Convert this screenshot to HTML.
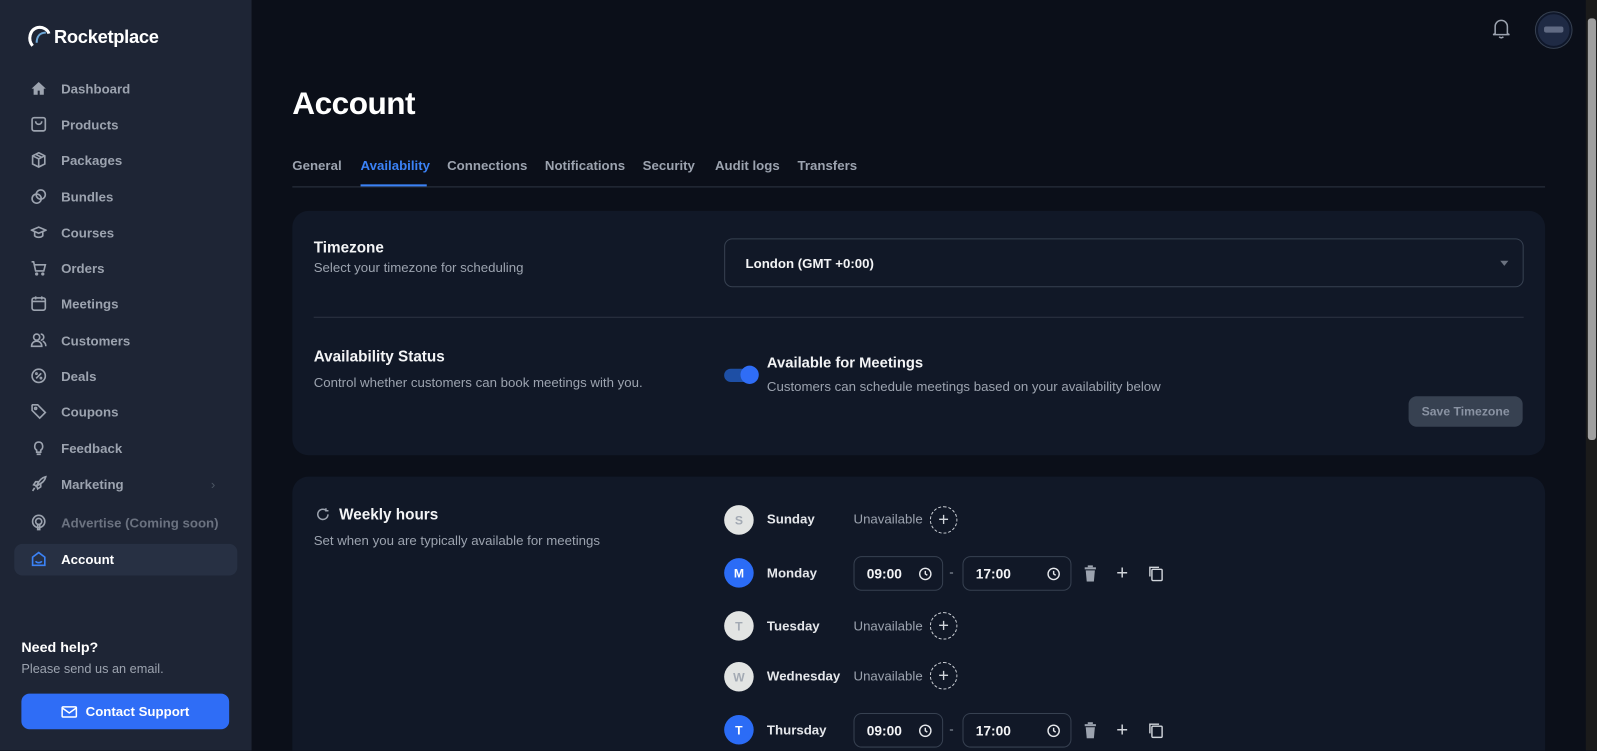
<!DOCTYPE html><html><head><meta charset="utf-8"><style>
*{box-sizing:border-box;margin:0;padding:0}
html{width:1597px;height:751px;overflow:hidden}
body{width:1597px;height:751px;overflow:hidden;background:#0b0f19;font-family:"Liberation Sans",sans-serif;position:relative;color:#e5e7eb}
#clip{position:absolute;left:0;top:0;width:1597px;height:751px;overflow:hidden}
#w{position:absolute;left:0;top:0;width:1568px;height:737px;overflow:hidden;transform:scale(1.0185);transform-origin:0 0}
.a{position:absolute}
#sb{left:0;top:0;width:247px;height:737px;background:#1e2535}
.ni{position:absolute;left:30px;font-size:13px;font-weight:bold;color:#9ca3af;display:flex;align-items:center;height:20px}
.ni svg{width:16px;height:16px;margin-right:14px;stroke:#9ca3af;fill:none;stroke-width:1.6}
.tab{position:absolute;top:155px;font-size:13px;font-weight:bold;color:#9ca3af}
.card{position:absolute;left:287px;width:1230px;background:#111827;border-radius:16px}
.t1{font-size:15px;font-weight:bold;color:#f3f4f6}
.t2{font-size:13px;color:#9ca3af}
.av{position:absolute;left:711px;width:29px;height:29px;border-radius:50%;font-size:12px;font-weight:bold;display:flex;align-items:center;justify-content:center}
.gr{background:#e2e4e3;color:#a3aab4}
.bl{background:#2b6cf6;color:#fff}
.dn{position:absolute;left:753px;font-size:13px;font-weight:bold;color:#e5e7eb}
.un{position:absolute;left:838px;font-size:13px;color:#9ca3af}
.pl{position:absolute;left:913px;width:27px;height:27px;border:1px dashed #d1d5db;border-radius:50%;color:#d1d5db;font-size:18px;line-height:24px;text-align:center}
.tm{position:absolute;height:34px;border:1px solid #374151;border-radius:8px;font-size:13.5px;font-weight:bold;color:#f3f4f6;padding:9px 0 0 12px}
.tm svg{position:absolute;right:10px;top:10px}
</style></head><body><div id="clip"><div id="w">
<div id="sb" class="a">
<div class="a" style="left:26px;top:24px;display:flex;align-items:center">
<svg width="24" height="24" viewBox="0 0 24 24"><path d="M6 21C1 15 3 5 11 3c5-1 10 2 11 6" stroke="#fff" stroke-width="3" fill="none"/><path d="M10 18c0-6 3-10 9-10" stroke="#6ea8d8" stroke-width="2" fill="none"/></svg>
<span style="font-size:18px;font-weight:bold;color:#fff;margin-left:3px;letter-spacing:-0.3px">Rocketplace</span></div>
<div class="ni" style="top:77px"><svg viewBox="0 0 16 16" style="fill:#9ca3af;stroke:none"><path d="M8 1.5L1 8h2v6h4v-4h2v4h4V8h2z"/></svg>Dashboard</div>
<div class="ni" style="top:112px"><svg viewBox="0 0 16 16"><rect x="1.5" y="1.5" width="13" height="13" rx="2"/><path d="M5 5c0 4 6 4 6 0"/></svg>Products</div>
<div class="ni" style="top:147px"><svg viewBox="0 0 16 16"><path d="M8 1l6 3v8l-6 3-6-3V4zM2 4l6 3 6-3M8 7v8M5 2.5l6 3"/></svg>Packages</div>
<div class="ni" style="top:183px"><svg viewBox="0 0 16 16"><circle cx="6" cy="10" r="4.5"/><circle cx="10" cy="6" r="4.5"/></svg>Bundles</div>
<div class="ni" style="top:218px"><svg viewBox="0 0 16 16"><path d="M1 6l7-3 7 3-7 3zM4 7.5v4c2 2 6 2 8 0v-4"/></svg>Courses</div>
<div class="ni" style="top:253px"><svg viewBox="0 0 16 16"><path d="M1 2h2l2 9h8l1.5-6H4"/><circle cx="6" cy="14" r=".8"/><circle cx="12" cy="14" r=".8"/></svg>Orders</div>
<div class="ni" style="top:288px"><svg viewBox="0 0 16 16"><rect x="1.5" y="2.5" width="13" height="12" rx="2"/><path d="M1.5 6h13M5 1v3M11 1v3"/></svg>Meetings</div>
<div class="ni" style="top:324px"><svg viewBox="0 0 16 16"><circle cx="6" cy="5" r="3"/><path d="M1 14c0-3 2-5 5-5s5 2 5 5zM10 2a3 3 0 010 6M12 9c2 1 3 3 3 5"/></svg>Customers</div>
<div class="ni" style="top:359px"><svg viewBox="0 0 16 16"><circle cx="8" cy="8" r="6.5"/><path d="M5.5 10.5l5-5"/><circle cx="5.8" cy="5.8" r=".6"/><circle cx="10.2" cy="10.2" r=".6"/></svg>Deals</div>
<div class="ni" style="top:394px"><svg viewBox="0 0 16 16"><path d="M1.5 2v5l7.5 7.5 5.5-5.5L7 1.5H2z"/><circle cx="5" cy="5" r="1"/></svg>Coupons</div>
<div class="ni" style="top:430px"><svg viewBox="0 0 16 16"><path d="M6 12v-2C3 8 3.5 2 8 2s5 6 2 8v2zM6 14h4"/></svg>Feedback</div>
<div class="ni" style="top:465px"><svg viewBox="0 0 16 16"><path d="M4 12l-2 3M6 10c3-6 5-8 9-9-1 4-3 6-9 9zM6 10L3 9l2-3h3M6 10l1 3 3-2V8"/></svg>Marketing<span style="position:absolute;left:177px;color:#4b5563;font-weight:normal">›</span></div>
<div class="ni" style="top:503px;color:#6b7280"><svg viewBox="0 0 16 16"><circle cx="8" cy="7" r="6"/><circle cx="8" cy="7" r="3"/><path d="M7 9v6h2V9"/></svg>Advertise (Coming soon)</div>
<div class="a" style="left:14px;top:534px;width:219px;height:31px;background:#273043;border-radius:8px"></div>
<div class="ni" style="top:539px;color:#fff"><svg viewBox="0 0 16 16" style="stroke:#3b82f6"><path d="M2 6l6-4.5L14 6v8H2zM5 10c1 2 5 2 6 0"/></svg>Account</div>
<div class="a" style="left:21px;top:627px;font-size:14px;font-weight:bold;color:#fff">Need help?</div>
<div class="a" style="left:21px;top:650px;font-size:12.5px;color:#9ca3af">Please send us an email.</div>
<div class="a" style="left:21px;top:681px;width:204px;height:35px;background:#2f6df6;border-radius:8px;color:#fff;font-size:13px;font-weight:bold;display:flex;align-items:center;justify-content:center"><svg width="16" height="14" viewBox="0 0 16 14" style="margin-right:8px" fill="none" stroke="#fff" stroke-width="1.5"><rect x="1" y="2" width="14" height="10" rx="1"/><path d="M1 3l7 5 7-5"/></svg>Contact Support</div>
</div>
<svg class="a" style="left:1464px;top:17px" width="20" height="22" viewBox="0 0 20 22" fill="none" stroke="#9ca3af" stroke-width="1.5"><path d="M4 16V9a6 6 0 0112 0v7l2 1H2zM8 19c1 1.5 3 1.5 4 0"/></svg>
<div class="a" style="left:1508px;top:12px;width:35px;height:35px;border-radius:50%;background:#1f2a44;border:2px solid #0f172a;box-shadow:0 0 0 1px #374151"><div style="margin:12px 6px;height:6px;background:#8c96ad;border-radius:2px;opacity:.6"></div></div>
<div class="a" style="left:1557px;top:0;width:11px;height:737px;background:#1b1b1b"></div>
<div class="a" style="left:1559px;top:18px;width:8px;height:414px;background:#a0a0a0;border-radius:3px"></div>
<div class="a" style="left:287px;top:84px;font-size:31px;font-weight:bold;color:#fff;letter-spacing:-0.5px">Account</div>
<div class="tab" style="left:287px">General</div>
<div class="tab" style="left:354px;color:#3b82f6">Availability</div>
<div class="tab" style="left:439px">Connections</div>
<div class="tab" style="left:535px">Notifications</div>
<div class="tab" style="left:631px">Security</div>
<div class="tab" style="left:702px">Audit logs</div>
<div class="tab" style="left:783px">Transfers</div>
<div class="a" style="left:287px;top:183px;width:1230px;height:1px;background:#2d3443"></div>
<div class="a" style="left:354px;top:181px;width:65px;height:2px;background:#3b82f6"></div>
<div class="card" style="top:207px;height:240px"></div>
<div class="a t1" style="left:308px;top:235px">Timezone</div>
<div class="a t2" style="left:308px;top:255px">Select your timezone for scheduling</div>
<div class="a" style="left:711px;top:234px;width:785px;height:48px;border:1px solid #374151;border-radius:8px;font-size:13px;font-weight:bold;color:#f3f4f6;padding:16px 0 0 20px">London (GMT +0:00)<span style="position:absolute;right:14px;top:21px;border:4px solid transparent;border-top:5px solid #6b7280"></span></div>
<div class="a" style="left:308px;top:311px;width:1188px;height:1px;background:#2d3443"></div>
<div class="a t1" style="left:308px;top:342px">Availability Status</div>
<div class="a t2" style="left:308px;top:368px">Control whether customers can book meetings with you.</div>
<div class="a" style="left:711px;top:362px;width:32px;height:13px;background:#1e4fa5;border-radius:7px"></div>
<div class="a" style="left:727px;top:359px;width:18px;height:18px;background:#2f6df6;border-radius:50%"></div>
<div class="a t1" style="left:753px;top:349px;font-size:14.5px">Available for Meetings</div>
<div class="a t2" style="left:753px;top:372px">Customers can schedule meetings based on your availability below</div>
<div class="a" style="left:1383px;top:389px;width:112px;height:30px;background:#374151;border-radius:8px;color:#8a93a3;font-size:12px;font-weight:bold;text-align:center;line-height:30px">Save Timezone</div>
<div class="card" style="top:468px;height:290px"></div>
<svg class="a" style="left:310px;top:498px" width="14" height="14" viewBox="0 0 14 14" fill="none" stroke="#9ca3af" stroke-width="1.5"><path d="M12 7a5 5 0 11-2-4M10 1v2.5h2.5"/></svg>
<div class="a t1" style="left:333px;top:497px">Weekly hours</div>
<div class="a t2" style="left:308px;top:523px">Set when you are typically available for meetings</div>
<div class="av gr" style="top:496px">S</div><div class="dn" style="top:502px">Sunday</div><div class="un" style="top:502px">Unavailable</div><div class="pl" style="top:497px">+</div>
<div class="av bl" style="top:548px">M</div><div class="dn" style="top:555px">Monday</div>
<div class="av gr" style="top:600px">T</div><div class="dn" style="top:607px">Tuesday</div><div class="un" style="top:607px">Unavailable</div><div class="pl" style="top:601px">+</div>
<div class="av gr" style="top:650px">W</div><div class="dn" style="top:656px">Wednesday</div><div class="un" style="top:656px">Unavailable</div><div class="pl" style="top:650px">+</div>
<div class="av bl" style="top:702px">T</div><div class="dn" style="top:709px">Thursday</div>
<div id="rows"></div>
</div></div>
<script>
var h='';[546,700].forEach(function(y){
var ck='<svg width="13" height="13" viewBox="0 0 13 13" fill="none" stroke="#e5e7eb" stroke-width="1.4"><circle cx="6.5" cy="6.5" r="5.5"/><path d="M6.5 3.5v3l2 1.3"/></svg>';
h+='<div class="tm" style="left:838px;top:'+y+'px;width:88px">09:00'+ck+'</div>';
h+='<div class="a" style="left:932px;top:'+(y+8)+'px;color:#9ca3af;font-size:13px">-</div>';
h+='<div class="tm" style="left:945px;top:'+y+'px;width:107px">17:00'+ck+'</div>';
h+='<svg class="a" style="left:1064px;top:'+(y+9)+'px" width="13" height="16" viewBox="0 0 13 16" fill="#9ca3af"><rect x="1" y="2" width="11" height="2"/><rect x="4" y="0" width="5" height="2"/><path d="M2 5h9l-1 11H3z"/></svg>';
h+='<div class="a" style="left:1096px;top:'+(y+6)+'px;color:#d1d5db;font-size:20px">+</div>';
h+='<svg class="a" style="left:1127px;top:'+(y+9)+'px" width="16" height="16" viewBox="0 0 16 16" fill="none" stroke="#d1d5db" stroke-width="1.4"><rect x="4" y="4" width="10" height="11" rx="1"/><path d="M2 11V2h9"/></svg>';
});document.getElementById('rows').innerHTML=h;
</script>
</body></html>
